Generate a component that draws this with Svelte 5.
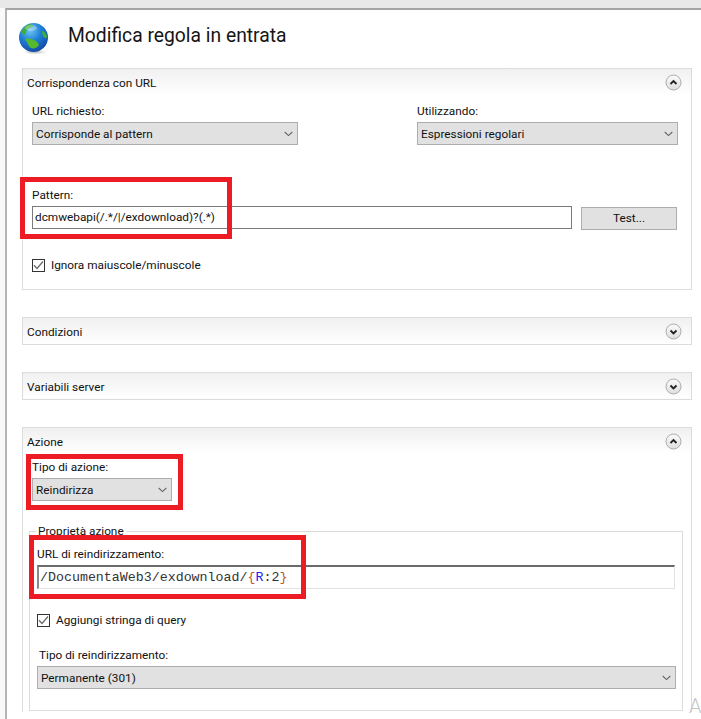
<script>
  const collapsed = ['Condizioni', 'Variabili server'];
</script>

{#snippet chevron()}
  <svg class="chev" width="9" height="6" viewBox="0 0 9 6"><path d="M.7 1l3.8 3.6L8.3 1" fill="none" stroke="#666" stroke-width="1.1" /></svg>
{/snippet}

{#snippet toggle(open)}
  <svg class="toggle" width="17" height="17" viewBox="0 0 17 17">
    <defs>
      <linearGradient id="tg" x1="0" y1="0" x2="0" y2="1">
        <stop offset="0" stop-color="#fbfbfb" />
        <stop offset="1" stop-color="#dedede" />
      </linearGradient>
    </defs>
    <circle cx="8.5" cy="8.5" r="7.5" fill="url(#tg)" stroke="#ababab" />
    <path d={open ? 'M5.5 10l3-3 3 3' : 'M5.5 7.5l3 3 3-3'} fill="none" stroke="#222" stroke-width="1.8" />
  </svg>
{/snippet}

{#snippet check()}
  <span class="check">
    <svg width="13" height="13" viewBox="0 0 13 13"><path d="M2 6.3l3 3.2 6-7" fill="none" stroke="#6a6a6a" stroke-width="1.3" /></svg>
  </span>
{/snippet}

<div class="window">
  <header class="title">
    <svg class="globe" width="32" height="34" viewBox="0 0 32 34">
      <defs>
        <radialGradient id="sea" cx="0.38" cy="0.25" r="0.85">
          <stop offset="0" stop-color="#6fc8f0" />
          <stop offset="0.45" stop-color="#1f7fd8" />
          <stop offset="1" stop-color="#123f9c" />
        </radialGradient>
        <radialGradient id="shade" cx="0.5" cy="0.5" r="0.5">
          <stop offset="0" stop-color="#8a8a8a" stop-opacity="0.6" />
          <stop offset="1" stop-color="#8a8a8a" stop-opacity="0" />
        </radialGradient>
      </defs>
      <ellipse cx="16" cy="30" rx="12" ry="2.5" fill="url(#shade)" />
      <circle cx="14.5" cy="15.5" r="14.5" fill="url(#sea)" />
      <path d="M2 10c2-4 5-7 9-8 1 1 3 1 4 2-2 1-3 2-5 2-1 2-3 2-3 4 0 1-1 3-2 3-1-1-2-2-3-3z" fill="#3fae3a" />
      <path d="M6 17c3-1 6 0 9 1 3 1 4 3 5 5-2 3-5 4-8 3-3-2-3-5-6-9z" fill="#55b82f" />
      <path d="M23 9c2 0 4 2 5 5 0 2-1 3-2 2-2-1-3-4-3-7z" fill="#3fae3a" />
      <ellipse cx="12" cy="6" rx="6" ry="3" fill="#fff" opacity="0.3" />
    </svg>
    <h1>Modifica regola in entrata</h1>
  </header>

  <section class="panel first">
    <div class="head">
      <span>Corrispondenza con URL</span>
      {@render toggle(true)}
    </div>
    <div class="body">
      <div class="two">
        <div class="field left">
          <div class="label">URL richiesto:</div>
          <div class="select">Corrisponde al pattern{@render chevron()}</div>
        </div>
        <div class="field right">
          <div class="label">Utilizzando:</div>
          <div class="select">Espressioni regolari{@render chevron()}</div>
        </div>
      </div>
      <div class="label pattern-label">Pattern:</div>
      <div class="pattern-row">
        <div class="input">dcmwebapi(/.*/|/exdownload)?(.*)</div>
        <div class="button">Test...</div>
      </div>
      <div class="check-row ignore">{@render check()}<span>Ignora maiuscole/minuscole</span></div>
    </div>
  </section>

  {#each collapsed as name}
    <section class="panel closed">
      <div class="head">
        <span>{name}</span>
        {@render toggle(false)}
      </div>
    </section>
  {/each}

  <section class="panel action">
    <div class="head">
      <span>Azione</span>
      {@render toggle(true)}
    </div>
    <div class="body">
      <div class="label action-label">Tipo di azione:</div>
      <div class="select short">Reindirizza{@render chevron()}</div>

      <fieldset>
        <legend>Proprietà azione</legend>
        <div class="label">URL di reindirizzamento:</div>
        <div class="rewrite"><span>/DocumentaWeb3/exdownload/</span><span class="brace">&#123;</span><span class="var">R</span><span>:2</span><span class="brace">&#125;</span></div>
        <div class="check-row query">{@render check()}<span>Aggiungi stringa di query</span></div>
        <div class="label redirect-label">Tipo di reindirizzamento:</div>
        <div class="select">Permanente (301){@render chevron()}</div>
      </fieldset>
    </div>
  </section>
</div>

<div class="mark mark-pattern"></div>
<div class="mark mark-type"></div>
<div class="mark mark-url"></div>
<div class="stray">A</div>

<style>
  :global(body) {
    background: #f9f9f9;
    overflow: hidden;
    height: 719px;
  }

  :global(#app) {
    position: relative;
    height: 719px;
    overflow: hidden;
    border-top: 8px solid #e8e8e8;
    box-sizing: border-box;
    font-family: Roboto, "Liberation Sans", sans-serif;
    font-size: 11.8px;
    color: #111;
  }

  .window {
    margin-left: 5px;
    height: 711px;
    box-sizing: border-box;
    background: #fff;
    border-top: 2px solid #a3a3a3;
    border-left: 2px solid #b4b4b4;
    padding: 14px 9px 0 15px;
  }

  .title {
    display: flex;
    align-items: flex-start;
    height: 44px;
  }

  .globe {
    margin-left: -3px;
    margin-top: -2px;
  }

  h1 {
    margin: 0 0 0 17px;
    font-size: 19.3px;
    font-weight: 400;
    line-height: 24px;
    color: #151515;
  }

  .panel {
    border: 1px solid #dcdcdc;
    margin-bottom: 27px;
  }

  .first {
    height: 222px;
    box-sizing: border-box;
  }

  .action {
    height: 285px;
    box-sizing: border-box;
    border-bottom: 0;
    margin-bottom: 0;
  }

  .head {
    height: 26px;
    padding: 0 9px 0 4px;
    display: flex;
    align-items: center;
    justify-content: space-between;
    background: linear-gradient(#f0f0f0, #ffffff);
  }

  .head span {
    padding-top: 2px;
  }

  .toggle {
    margin-top: 1px;
  }

  .body {
    padding: 8px 13px 0 9px;
  }

  .label {
    height: 19px;
    line-height: 17px;
  }

  .two {
    display: flex;
    justify-content: space-between;
  }

  .field.left {
    width: 266px;
  }

  .field.right {
    width: 261px;
  }

  .select {
    height: 23px;
    box-sizing: border-box;
    padding: 0 4px 0 3px;
    display: flex;
    align-items: center;
    justify-content: space-between;
    background: #e1e1e1;
    border: 1px solid #adadad;
  }

  .select.short {
    width: 140px;
  }

  .pattern-label {
    margin-top: 42px;
  }

  .pattern-row {
    display: flex;
    justify-content: space-between;
    align-items: flex-start;
  }

  .input {
    width: 540px;
    height: 23px;
    box-sizing: border-box;
    line-height: 21px;
    padding-left: 2px;
    background: #fff;
    border: 1px solid #7a7a7a;
  }

  .button {
    width: 96px;
    height: 23px;
    margin-top: 1px;
    margin-right: 1px;
    box-sizing: border-box;
    line-height: 21px;
    text-align: center;
    background: #e1e1e1;
    border: 1px solid #adadad;
  }

  .check-row {
    display: flex;
    align-items: center;
    gap: 6px;
    height: 16px;
  }

  .check {
    width: 13px;
    height: 13px;
    box-sizing: border-box;
    border: 1px solid #333;
    background: #fff;
    display: flex;
    align-items: center;
    justify-content: center;
    flex: none;
  }

  .check svg {
    flex: none;
  }

  .ignore {
    margin-top: 27px;
  }

  .action-label {
    margin-top: -3px;
  }

  fieldset {
    margin: 23px -5px 0 -3px;
    padding: 8px 6px 0 7px;
    border: 1px solid #dcdcdc;
    min-width: 0;
    height: 187px;
    box-sizing: border-box;
  }

  legend {
    padding: 0 2px;
    margin-left: -1px;
    line-height: 14px;
  }

  .rewrite {
    height: 24px;
    margin-right: 1px;
    box-sizing: border-box;
    border: 1px solid #e3e3e3;
    border-top: 2px solid #6a6a6a;
    border-left: 2px solid #8a8a8a;
    padding-left: 1px;
    line-height: 21px;
    font-family: "Liberation Mono", monospace;
    font-size: 13.3px;
    color: #333;
  }

  .brace {
    color: #c0562a;
  }

  .var {
    color: #2222ee;
  }

  .query {
    margin-top: 23px;
  }

  .redirect-label {
    margin-top: 19px;
    padding-left: 2px;
  }

  .mark {
    position: absolute;
    box-sizing: border-box;
    border: 5px solid #ed1c24;
    pointer-events: none;
  }

  .mark-pattern {
    left: 20px;
    top: 169px;
    width: 212px;
    height: 62px;
  }

  .mark-type {
    left: 26px;
    top: 446px;
    width: 157px;
    height: 56px;
  }

  .mark-url {
    left: 29px;
    top: 527px;
    width: 277px;
    height: 64px;
  }

  .stray {
    position: absolute;
    left: 689px;
    top: 686px;
    font-size: 20px;
    font-weight: 300;
    line-height: 24px;
    color: #c4c4c4;
  }
</style>
